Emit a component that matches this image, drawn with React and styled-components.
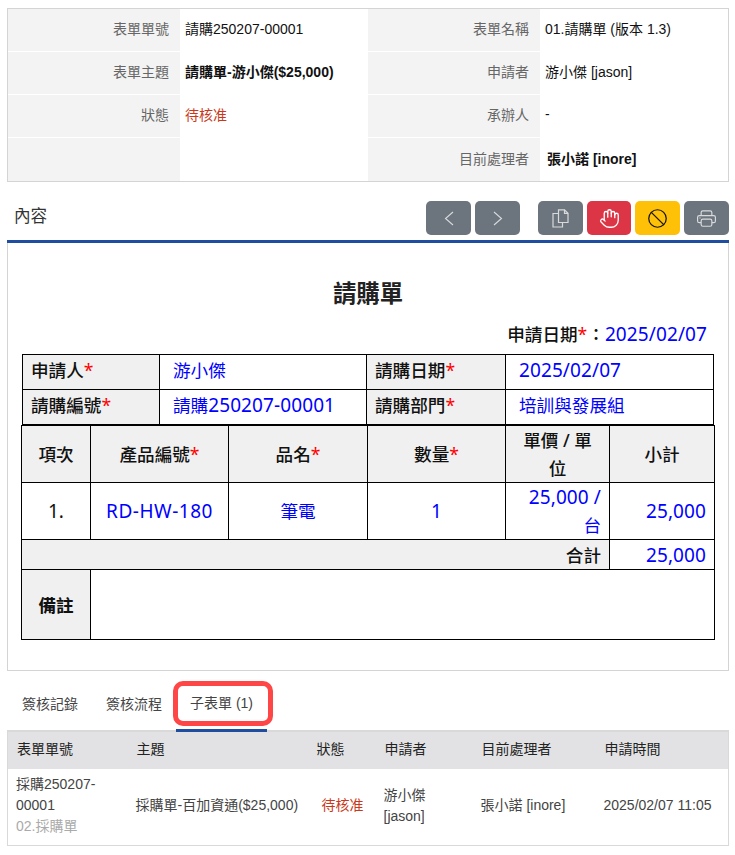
import React from 'react';
import styled, { createGlobalStyle } from 'styled-components';
import { BsPrinter } from 'react-icons/bs';
import { Ban, Hand } from 'lucide-react';

const GlobalStyle = createGlobalStyle`
  html, body {
    margin: 0;
    padding: 0;
    background: #fff;
  }
  body {
    font-family: "Liberation Sans", "Noto Sans CJK TC", sans-serif;
    color: #212121;
  }
`;

const ChevronIcon = ({ left }) => (
  <svg width="10" height="15" viewBox="0 0 10 15" fill="none" stroke="currentColor" strokeWidth="1.1">
    <polyline points={left ? '9,1 1.5,7.5 9,14' : '1,1 8.5,7.5 1,14'} />
  </svg>
);

const CopyIcon = () => (
  <svg width="17" height="19" viewBox="0 0 17 19" fill="none" stroke="currentColor" strokeWidth="1.2">
    <path d="M6.5 4.5H1v13.5h9.5v-4.5" />
    <path d="M6.5.8h6l3.5 3.5v9.2H6.5z" />
    <path d="M12.5.8v3.5H16" />
  </svg>
);

function App() {
  const infoRows = [
    ['表單單號', <>請購250207-00001</>, '表單名稱', <>01.請購單 (版本 1.3)</>],
    ['表單主題', <b>請購單-游小傑($25,000)</b>, '申請者', <>游小傑 [jason]</>],
    ['狀態', <Pending>待核准</Pending>, '承辦人', <>-</>],
    ['', '', '目前處理者', <Handler>張小諾 [inore]</Handler>],
  ];

  return (
    <Page>
      <GlobalStyle />

      {/* 表單基本資料 */}
      <InfoTable>
        {infoRows.map((row, i) => (
          <InfoRow key={i}>
            <InfoLabel>{row[0]}</InfoLabel>
            <InfoValue>{row[1]}</InfoValue>
            <InfoLabel>{row[2]}</InfoLabel>
            <InfoValue>{row[3]}</InfoValue>
          </InfoRow>
        ))}
      </InfoTable>

      <SectionHeader>
        <SectionTitle>內容</SectionTitle>
        <Toolbar>
          <ToolButton $bg="#6c757d"><ChevronIcon left /></ToolButton>
          <ToolButton $bg="#6c757d" $gapRight="14px"><ChevronIcon /></ToolButton>
          <ToolButton $bg="#6c757d"><CopyIcon /></ToolButton>
          <ToolButton $bg="#dc3545" $w="44px" $color="#fff"><Hand size={21} strokeWidth={1.5} /></ToolButton>
          <ToolButton $bg="#ffc107" $color="#111"><Ban size={21} strokeWidth={1.4} /></ToolButton>
          <ToolButton $bg="#6c757d"><BsPrinter /></ToolButton>
        </Toolbar>
      </SectionHeader>

      {/* 表單內容 */}
      <ContentPanel>
        <FormTitle>請購單</FormTitle>
        <FormDate>
          申請日期<Req>*</Req>：<Blue><Latin>2025/02/07</Latin></Blue>
        </FormDate>

        <HeadTable>
          <colgroup>
            <col style={{ width: 137 }} />
            <col style={{ width: 207 }} />
            <col style={{ width: 139 }} />
            <col style={{ width: 208 }} />
          </colgroup>
          <tbody>
            <tr>
              <HeadLabel>申請人<Req>*</Req></HeadLabel>
              <HeadValue>游小傑</HeadValue>
              <HeadLabel>請購日期<Req>*</Req></HeadLabel>
              <HeadValue><Latin>2025/02/07</Latin></HeadValue>
            </tr>
            <tr>
              <HeadLabel>請購編號<Req>*</Req></HeadLabel>
              <HeadValue>請購<Latin>250207-00001</Latin></HeadValue>
              <HeadLabel>請購部門<Req>*</Req></HeadLabel>
              <HeadValue>培訓與發展組</HeadValue>
            </tr>
          </tbody>
        </HeadTable>

        <ItemTable>
          <colgroup>
            <col style={{ width: 69 }} />
            <col style={{ width: 138 }} />
            <col style={{ width: 139 }} />
            <col style={{ width: 138 }} />
            <col style={{ width: 104 }} />
            <col style={{ width: 105 }} />
          </colgroup>
          <tbody>
            <tr>
              <ItemHead>項次</ItemHead>
              <ItemHead>產品編號<Req>*</Req></ItemHead>
              <ItemHead>品名<Req>*</Req></ItemHead>
              <ItemHead>數量<Req>*</Req></ItemHead>
              <ItemHead>單價 / 單位</ItemHead>
              <ItemHead>小計</ItemHead>
            </tr>
            <ItemRow>
              <ItemCell $black><Latin>1.</Latin></ItemCell>
              <ItemCell><Latin $ls="0.5px">RD-HW-180</Latin></ItemCell>
              <ItemCell>筆電</ItemCell>
              <ItemCell><Latin>1</Latin></ItemCell>
              <ItemCell $right><Latin>25,000 /</Latin> 台</ItemCell>
              <ItemCell $right><Latin>25,000</Latin></ItemCell>
            </ItemRow>
            <TotalRow>
              <TotalLabel colSpan={5}>合計</TotalLabel>
              <ItemCell $right><Latin>25,000</Latin></ItemCell>
            </TotalRow>
            <NoteRow>
              <ItemHead $bold>備註</ItemHead>
              <ItemCell colSpan={5} />
            </NoteRow>
          </tbody>
        </ItemTable>
      </ContentPanel>

      {/* 頁籤 */}
      <Tabs>
        <Tab>簽核記錄</Tab>
        <Tab>簽核流程</Tab>
        <ActiveTab>
          子表單 (1)
          <Callout />
        </ActiveTab>
      </Tabs>

      <SubTable>
        <colgroup>
          <col style={{ width: 120 }} />
          <col style={{ width: 180 }} />
          <col style={{ width: 68 }} />
          <col style={{ width: 97 }} />
          <col style={{ width: 123 }} />
          <col />
        </colgroup>
        <thead>
          <tr>
            <SubHead>表單單號</SubHead>
            <SubHead>主題</SubHead>
            <SubHead>狀態</SubHead>
            <SubHead>申請者</SubHead>
            <SubHead>目前處理者</SubHead>
            <SubHead>申請時間</SubHead>
          </tr>
        </thead>
        <tbody>
          <tr>
            <SubCell $padR="2px">
              採購250207-00001
              <FormKind>02.採購單</FormKind>
            </SubCell>
            <SubCell>採購單-百加資通($25,000)</SubCell>
            <SubCell $pad="14px"><Pending>待核准</Pending></SubCell>
            <SubCell $padR="12px">游小傑 [jason]</SubCell>
            <SubCell>張小諾 [inore]</SubCell>
            <SubCell>2025/02/07 11:05</SubCell>
          </tr>
        </tbody>
      </SubTable>
    </Page>
  );
}

export default App;

// 스타일 정의
const Page = styled.div`
  width: 722px;
  padding: 8px 6px 0 7px;
`;

const Pending = styled.span`
  color: #c9381a;
`;

const Handler = styled.b`
  margin-left: 2px;
`;

const InfoTable = styled.div`
  border: 1px solid #d4d4d4;
  display: flex;
  flex-direction: column;
`;

const InfoRow = styled.div`
  display: grid;
  grid-template-columns: 172px 188px 172px 188px;
  height: 43px;
  &:not(:last-child) > div {
    border-bottom: 1px solid #fff;
  }
`;

const InfoLabel = styled.div`
  background: #f3f3f3;
  color: #666;
  font-size: 14px;
  display: flex;
  align-items: center;
  justify-content: flex-end;
  padding: 0 11px 4px 0;
`;

const InfoValue = styled.div`
  background: #fff;
  color: #111;
  font-size: 14px;
  display: flex;
  align-items: center;
  padding: 0 0 4px 5px;
`;

const SectionHeader = styled.div`
  display: flex;
  align-items: center;
  justify-content: space-between;
  height: 34px;
  margin-top: 19px;
  padding-bottom: 5px;
  border-bottom: 3px solid #1f4ea1;
`;

const SectionTitle = styled.h2`
  margin: 0 0 7px 7px;
  font-size: 16.6px;
  font-weight: 400;
  color: #333;
`;

const Toolbar = styled.div`
  display: flex;
  gap: 4px;
`;

const ToolButton = styled.button`
  width: ${(p) => p.$w || '45px'};
  height: 34px;
  margin-right: ${(p) => p.$gapRight || '0'};
  padding: 0;
  border: none;
  border-radius: 5px;
  background: ${(p) => p.$bg};
  color: ${(p) => p.$color || '#d8dadc'};
  font-size: 19px;
  display: flex;
  align-items: center;
  justify-content: center;
`;

const ContentPanel = styled.section`
  border: 1px solid #d4d4d4;
  border-top: none;
  height: 427px;
  padding: 0 13px;
  font-family: "Noto Sans", "Noto Sans CJK TC", sans-serif;
  font-size: 17.6px;
  color: #111;
`;

const Latin = styled.span`
  font-size: 19px;
  line-height: 1;
  letter-spacing: ${(p) => p.$ls || '0.1px'};
`;

const FormTitle = styled.h1`
  margin: 0;
  padding-top: 34px;
  text-align: center;
  font-size: 23.4px;
  line-height: 32px;
  font-weight: 700;
  color: #222;
`;

const FormDate = styled.div`
  margin-top: 9px;
  padding-right: 8px;
  height: 36px;
  line-height: 32px;
  text-align: right;
  font-weight: 500;
`;

const Req = styled.span`
  color: #f00;
  font-weight: 400;
`;

const Blue = styled.span`
  color: #00f;
  font-weight: 400;
`;

const HeadTable = styled.table`
  width: 691px;
  margin: 0 0 0 1px;
  border-collapse: collapse;
  table-layout: fixed;
  line-height: 26px;
  td {
    height: 30px;
    border: 1px solid #000;
    padding-top: 0;
    padding-bottom: 4px;
    padding-right: 0;
  }
`;

const HeadLabel = styled.td`
  background: #f0f0f0;
  padding-left: 8px;
  font-weight: 500;
`;

const HeadValue = styled.td`
  color: #00f;
  padding-left: 13px;
`;

const ItemTable = styled.table`
  width: 693px;
  margin-top: 0;
  border-collapse: collapse;
  table-layout: fixed;
  line-height: 28px;
`;

const ItemHead = styled.td`
  height: 56px;
  padding: 0 10px;
  border: 1px solid #000;
  background: #f0f0f0;
  text-align: center;
  font-weight: ${(p) => (p.$bold ? 700 : 500)};
`;

const ItemRow = styled.tr`
  height: 57px;
`;

const ItemCell = styled.td`
  padding: 0 8px;
  border: 1px solid #000;
  color: ${(p) => (p.$black ? '#111' : '#00f')};
  text-align: ${(p) => (p.$right ? 'right' : 'center')};
`;

const TotalRow = styled.tr`
  height: 30px;
`;

const TotalLabel = styled.td`
  padding: 0 8px;
  border: 1px solid #000;
  background: #f0f0f0;
  text-align: right;
  font-weight: 500;
`;

const NoteRow = styled.tr`
  height: 70px;
`;

const Tabs = styled.nav`
  display: flex;
  height: 59px;
  align-items: center;
  border-bottom: 2px solid #d9d9d9;
  padding-left: 15px;
  font-size: 14px;
  color: #444;
`;

const Tab = styled.div`
  padding-top: 4px;
  margin-right: 28px;
`;

const ActiveTab = styled.div`
  position: relative;
  align-self: stretch;
  display: flex;
  align-items: center;
  width: 91px;
  margin-left: -14px;
  padding: 4px 0 0 14px;
  box-sizing: border-box;
  border-bottom: 3px solid #1f4ea1;
  margin-bottom: -2px;
  color: #444;
`;

const Callout = styled.span`
  position: absolute;
  left: -3px;
  top: 10px;
  width: 100px;
  height: 45px;
  box-sizing: border-box;
  border: 5px solid #ff4646;
  border-radius: 10px;
`;

const SubTable = styled.table`
  width: 722px;
  margin-top: 0;
  border-collapse: collapse;
  table-layout: fixed;
  font-size: 14px;
  border: 1px solid #d9d9d9;
  border-top: none;
`;

const SubHead = styled.th`
  height: 37px;
  padding: 0 0 6px 9px;
  box-sizing: border-box;
  background: #e2e2e5;
  text-align: left;
  font-weight: 400;
  color: #222;
`;

const SubCell = styled.td`
  height: 76px;
  padding: 0 ${(p) => p.$padR || '0'} 2px ${(p) => p.$pad || '8px'};
  box-sizing: border-box;
  line-height: 21px;
  color: #444;
`;

const FormKind = styled.div`
  color: #aaa;
`;
